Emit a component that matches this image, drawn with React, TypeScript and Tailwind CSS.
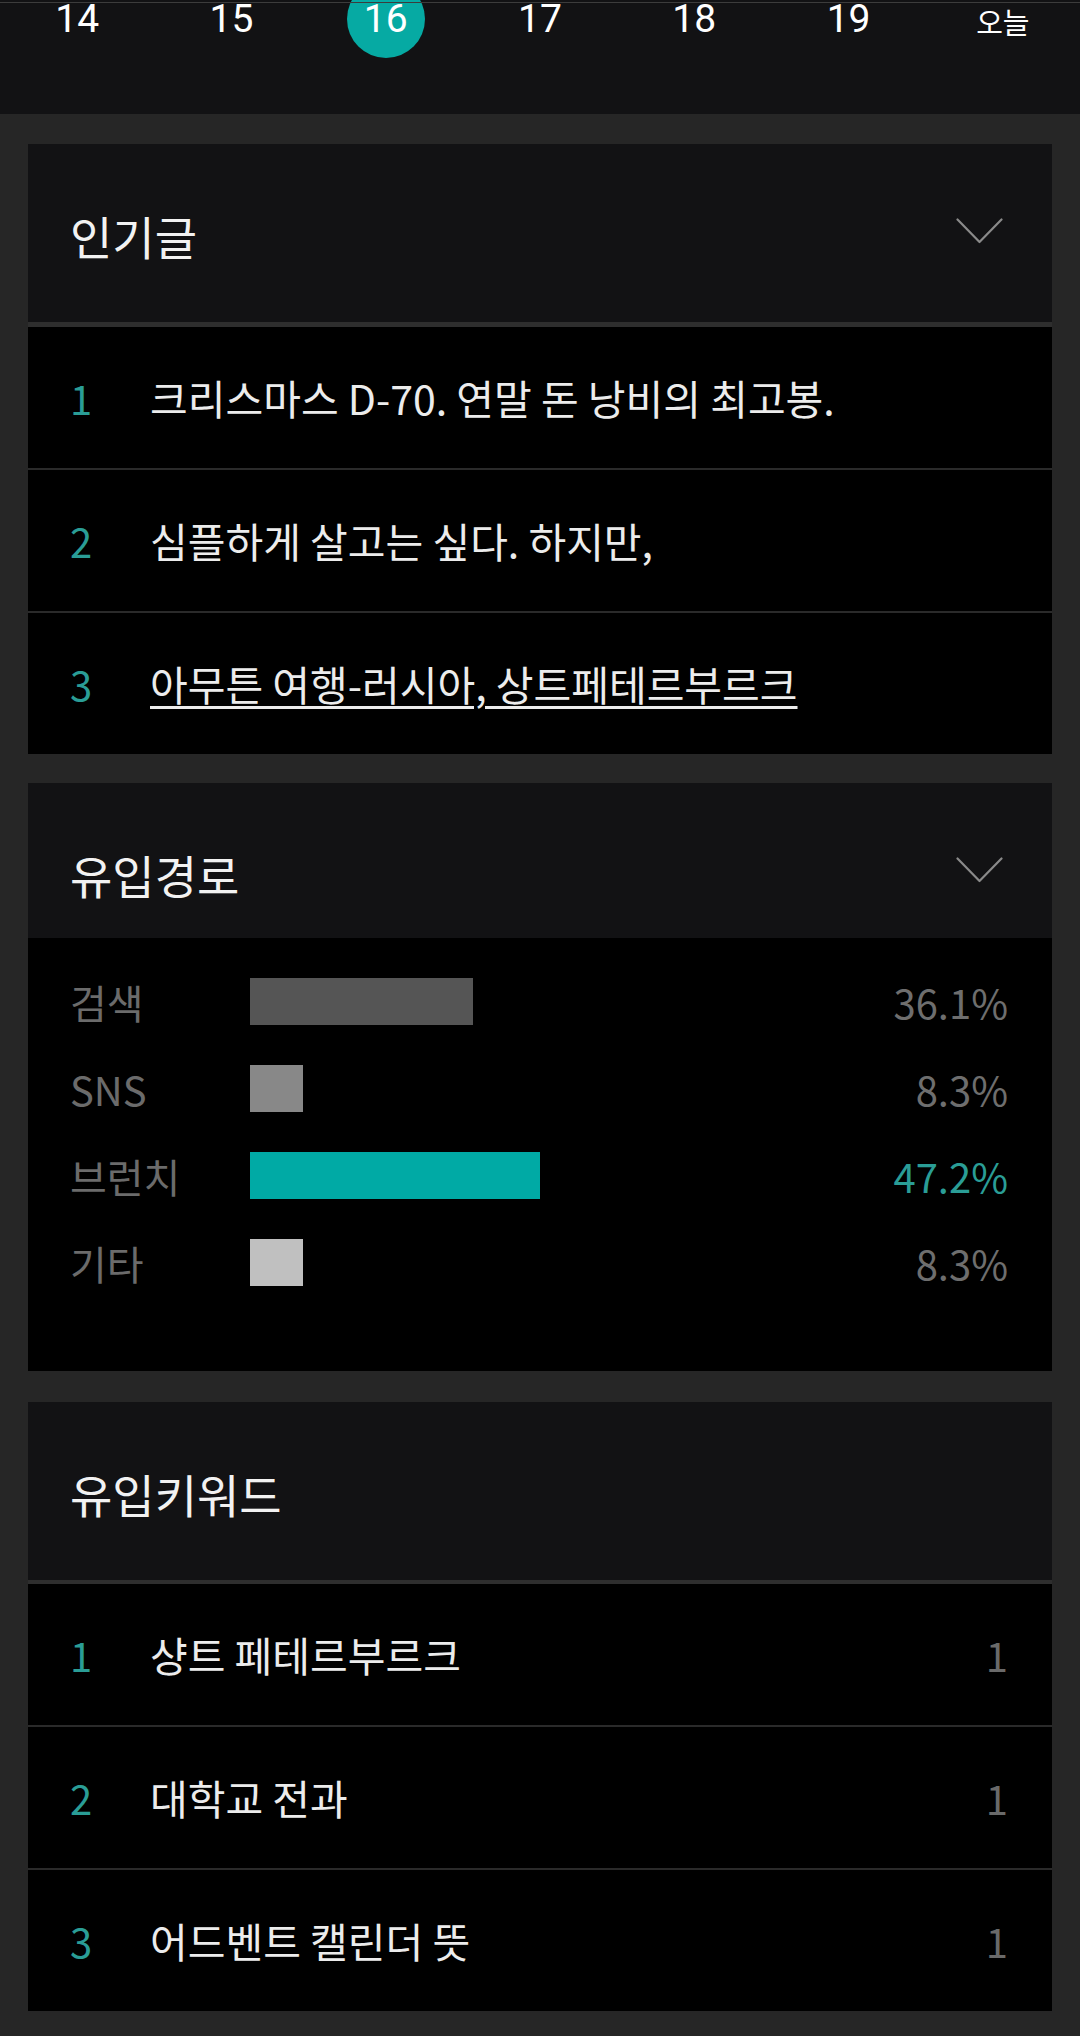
import React from 'react';

const days = ['14', '15', '16', '17', '18', '19', '오늘'];

const popular = [
  { rank: 1, title: '크리스마스 D-70. 연말 돈 낭비의 최고봉.' },
  { rank: 2, title: '심플하게 살고는 싶다. 하지만,' },
  { rank: 3, title: '아무튼 여행-러시아, 상트페테르부르크', link: true },
];

const sources = [
  { label: '검색', pct: '36.1%', width: 223, bar: 'bg-[#555555]', text: 'text-[#6e6e6e]' },
  { label: 'SNS', pct: '8.3%', width: 53, bar: 'bg-[#888888]', text: 'text-[#6e6e6e]' },
  { label: '브런치', pct: '47.2%', width: 290, bar: 'bg-[#00aaa5]', text: 'text-[#2a9d96]' },
  { label: '기타', pct: '8.3%', width: 53, bar: 'bg-[#c0c0c0]', text: 'text-[#6e6e6e]' },
];

const keywords = [
  { rank: 1, word: '샹트 페테르부르크', count: 1 },
  { rank: 2, word: '대학교 전과', count: 1 },
  { rank: 3, word: '어드벤트 캘린더 뜻', count: 1 },
];

const Chevron = () => (
  <svg className="mt-[74px] mr-[5px] w-[47px] h-[26px]" viewBox="0 0 47 26" fill="none">
    <path d="M1.5 1.5 L23.5 24 L45.5 1.5" stroke="#8a8a8a" strokeWidth="2.2" strokeLinecap="round" strokeLinejoin="round" />
  </svg>
);

const CardHeader = ({ title, tall, chevron }: { title: string; tall: boolean; chevron: boolean }) => (
  <div className={`flex justify-between items-start pl-[42px] pr-[44px] bg-[#121214] ${tall ? 'h-[178px]' : 'h-[155px]'}`}>
    <h2 className="mt-[61px] text-[46px] leading-[60px] text-[#f2f2f2] font-normal">{title}</h2>
    {chevron && <Chevron />}
  </div>
);

const RankRow = ({ rank, children, right }: { rank: number; children: React.ReactNode; right?: React.ReactNode }) => (
  <div className="h-[141px] bg-black flex items-center pl-[42px] pr-[44px]">
    <span className="w-[80px] text-[40px] text-[#2a9d96] leading-none">{rank}</span>
    <div className="flex-1 text-[41px] text-[#ececec] leading-none">{children}</div>
    {right}
  </div>
);

const App: React.FC = () => {
  return (
    <div className="min-h-screen w-[1080px] bg-[#262626] pb-[26px]" style={{ fontFamily: '"Noto Sans CJK KR", "Noto Sans", sans-serif' }}>
      {/* date strip, scrolled so its top is cut off */}
      <header className="relative h-[114px] bg-[#121214] overflow-hidden">
        <div className="absolute top-[2px] left-0 right-0 h-px bg-[#3c3c3c]" />
        <div className="flex -mt-[20px]">
          {days.map((d) => (
            <div key={d} className="flex-1 h-[78px] flex items-center justify-center">
              {d === '16' ? (
                <div className="w-[78px] h-[78px] rounded-full bg-[#06aaa3] flex items-center justify-center">
                  <span className="mt-[1px] text-[39px] leading-none text-white" style={{ fontFamily: 'Roboto, sans-serif' }}>{d}</span>
                </div>
              ) : d === '오늘' ? (
                <span className="mt-[4px] text-[29px] leading-none text-white">{d}</span>
              ) : (
                <span className="mt-[1px] text-[39px] leading-none text-white" style={{ fontFamily: 'Roboto, sans-serif' }}>{d}</span>
              )}
            </div>
          ))}
        </div>
      </header>

      {/* popular posts */}
      <section className="mx-[28px] mt-[30px]">
        <CardHeader title="인기글" tall chevron />
        <div className="h-[5px] bg-[#2e2e2e]" />
        <div className="flex flex-col gap-[2px] bg-[#2a2a2a]">
          {popular.map((p) => (
            <RankRow key={p.rank} rank={p.rank}>
              {p.link ? (
                <span className="underline decoration-[3px] underline-offset-[5px]">{p.title}</span>
              ) : (
                p.title
              )}
            </RankRow>
          ))}
        </div>
      </section>

      {/* traffic sources */}
      <section className="mx-[28px] mt-[29px]">
        <CardHeader title="유입경로" tall={false} chevron />
        <div className="h-[433px] bg-black pt-[40px] pl-[42px] pr-[44px] flex flex-col gap-[40px]">
          {sources.map((s) => (
            <div key={s.label} className="h-[47px] flex items-center">
              <span className="w-[180px] text-[40px] text-[#6b6b6b] leading-none">{s.label}</span>
              <div className={`h-[47px] ${s.bar}`} style={{ width: s.width }} />
              <span className={`ml-auto text-[40px] leading-none ${s.text}`}>{s.pct}</span>
            </div>
          ))}
        </div>
      </section>

      {/* inbound keywords */}
      <section className="mx-[28px] mt-[31px]">
        <CardHeader title="유입키워드" tall chevron={false} />
        <div className="h-[4px] bg-[#2e2e2e]" />
        <div className="flex flex-col gap-[2px] bg-[#2a2a2a]">
          {keywords.map((k) => (
            <RankRow key={k.rank} rank={k.rank} right={<span className="text-[40px] leading-none text-[#6a6a6a]">{k.count}</span>}>
              {k.word}
            </RankRow>
          ))}
        </div>
      </section>
    </div>
  );
};

export default App;
